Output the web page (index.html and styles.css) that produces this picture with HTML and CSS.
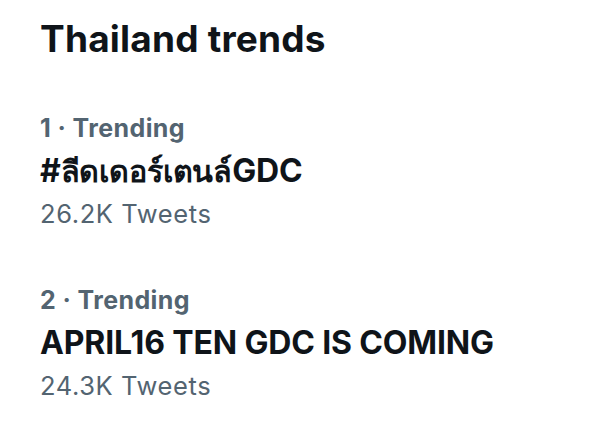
FILE: index.html
```html
<!DOCTYPE html>
<html lang="en">
<head>
    <meta charset="UTF-8">
    <title>Thailand trends</title>
    <link rel="stylesheet" href="styles.css">
</head>
<body>
    <div class="panel">
        <h1>Thailand trends</h1>

        <div class="trend">
            <div class="meta">1 · Trending</div>
            <div class="name">#<span class="thai" lang="th">ลีดเดอร์เตนล์</span>GDC</div>
            <div class="count">26.2K Tweets</div>
        </div>

        <div class="trend">
            <div class="meta">2 · Trending</div>
            <div class="name">APRIL16 TEN GDC IS COMING</div>
            <div class="count">24.3K Tweets</div>
        </div>
    </div>
</body>
</html>
```

FILE: styles.css
```css
* {
    margin: 0;
    padding: 0;
    box-sizing: border-box;
}

body {
    background: #ffffff;
    font-family: Inter, "Noto Sans", sans-serif;
    color: #0f1419;
}

.panel {
    padding: 17px 40px 0;
}

h1 {
    font-size: 37px;
    font-weight: 700;
    line-height: 44px;
    letter-spacing: 0.2px;
    margin-bottom: 51px;
}

.trend {
    display: flex;
    flex-direction: column;
    gap: 7px;
}

.trend + .trend {
    margin-top: 54px;
}

.meta {
    font-size: 25px;
    font-weight: 700;
    color: #536471;
    line-height: 32px;
    letter-spacing: 0.4px;
}

.name {
    font-size: 32px;
    font-weight: 700;
    line-height: 40px;
    letter-spacing: -0.15px;
}

/* fallback Thai face runs wider than the original */
.thai {
    font-size: 30.5px;
}

.count {
    font-size: 25.5px;
    color: #536471;
    line-height: 32px;
    letter-spacing: 0.6px;
}
```
